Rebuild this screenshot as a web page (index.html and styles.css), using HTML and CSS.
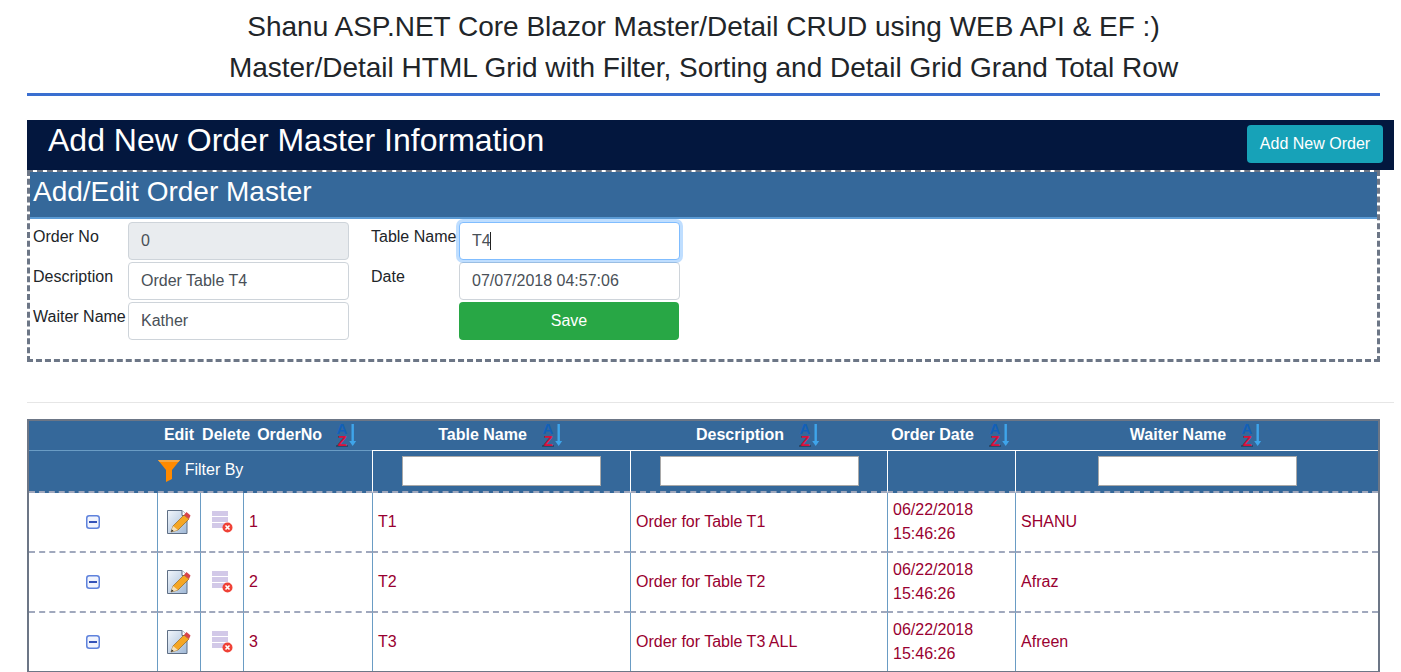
FILE: index.html
```html
<!doctype html>
<html lang="en-us">
	<head>
		<meta charset="utf-8">
		<title>Shanu ASP.NET Core Blazor Master/Detail CRUD</title>
		<link rel="stylesheet" href="styles.css">
	</head>
	<body>
		<svg class="sprite" width="0" height="0">
			<defs>
				<linearGradient id="page-fill" x1="0" y1="0" x2="1" y2="1">
					<stop offset="0" stop-color="#f2f6fb"/>
					<stop offset="1" stop-color="#9fb8d6"/>
				</linearGradient>
				<symbol id="icon-sort" viewBox="0 0 22 26">
					<rect x="1" y="23" width="12" height="2" fill="#2b4a6b"/>
					<text class="sort-a" x="7" y="12" text-anchor="middle">A</text>
					<text class="sort-z" x="7" y="24" text-anchor="middle">Z</text>
					<path d="M16.5 2h2.4v17h2.3l-3.5 5-3.500-5h2.300z" fill="#3fa5ea"/>
				</symbol>
				<symbol id="icon-minus" viewBox="0 0 14 14">
					<rect x=".75" y=".75" width="12.5" height="12.500" rx="2.500" fill="#f1f4fd" stroke="#5f82dc" stroke-width="1.500"/>
					<rect x="3" y="6" width="8" height="2" fill="#3453b8"/>
				</symbol>
				<symbol id="icon-edit" viewBox="0 0 24 24">
					<path d="M.5.500h14.500l5 5v18h-19.500z" fill="url(#page-fill)" stroke="#5f6f85"/>
					<path d="M15 .5v5h5" fill="#fff" stroke="#5f6f85"/>
					<path d="M4 22l2-6 11-11 5 4-11 11z" fill="#f5a623" stroke="#8a5a10" stroke-width=".6"/>
					<path d="M4 22l2-6 5 4z" fill="#f6dfb5"/>
					<path d="M4 22l.8-2.500 1.800 1.400z" fill="#222"/>
					<path d="M17 5l2.500-3 4 3.500-1.500 3.500z" fill="#d8434a"/>
				</symbol>
				<symbol id="icon-delete" viewBox="0 0 21 23">
					<rect x="0" y="0" width="16" height="5" fill="#d2c9e8"/>
					<rect x="0" y="6" width="16" height="5" fill="#d2c9e8"/>
					<rect x="0" y="12" width="16" height="5" fill="#d2c9e8"/>
					<circle cx="15.500" cy="16.500" r="5" fill="#ef4136"/>
					<path d="M13.500 14.500l4 4m0-4l-4 4" stroke="#fff" stroke-width="1.600" fill="none"/>
				</symbol>
				<symbol id="icon-filter" viewBox="0 0 22 22">
					<path d="M0 0h22l-8 10v9l-6 3v-12z" fill="#ff8a00"/>
					<path d="M0 0h22l-1.500 2h-19z" fill="#f5a742"/>
				</symbol>
			</defs>
		</svg>

		<div id="page">
			<div class="title">
				<div>Shanu ASP.NET Core Blazor Master/Detail CRUD using WEB API &amp; EF :)</div>
				<div>Master/Detail HTML Grid with Filter, Sorting and Detail Grid Grand Total Row</div>
			</div>
			<div class="rule-blue"></div>

			<div class="bar">
				<h1>Add New Order Master Information</h1>
				<button class="btn btn-add">Add New Order</button>
			</div>

			<div class="form-box">
				<h2>Add/Edit Order Master</h2>
				<div class="form-grid">
					<label>Order No</label>
					<input class="field field-off" value="0" readonly>
					<label class="second">Table Name</label>
					<div class="caret-wrap">
						<input class="field field-focus" value="T4">
						<span class="caret"></span>
					</div>

					<label>Description</label>
					<input class="field" value="Order Table T4">
					<label class="second">Date</label>
					<input class="field" value="07/07/2018 04:57:06">

					<label>Waiter Name</label>
					<input class="field" value="Kather">
					<span></span>
					<button class="btn btn-save">Save</button>
				</div>
			</div>

			<div class="rule-grey"></div>

			<table class="grid">
				<colgroup>
					<col class="c-toggle"><col class="c-icon"><col class="c-icon"><col class="c-no">
					<col class="c-table"><col class="c-desc"><col class="c-date"><col class="c-waiter">
				</colgroup>
				<thead>
					<tr class="head-row">
						<th colspan="4">
							<div class="head-first">
								<span class="head-edit">Edit</span><span>Delete</span><span>OrderNo</span>
								<svg class="sort"><use href="#icon-sort"/></svg>
							</div>
						</th>
						<th><div class="head-cell">Table Name <svg class="sort"><use href="#icon-sort"/></svg></div></th>
						<th><div class="head-cell">Description <svg class="sort"><use href="#icon-sort"/></svg></div></th>
						<th><div class="head-cell">Order Date <svg class="sort"><use href="#icon-sort"/></svg></div></th>
						<th><div class="head-cell">Waiter Name <svg class="sort"><use href="#icon-sort"/></svg></div></th>
					</tr>
					<tr class="filter-row">
						<th colspan="4">
							<div class="filter-by"><svg class="funnel"><use href="#icon-filter"/></svg><span class="filter-text">Filter By</span></div>
						</th>
						<th><input class="filter-input"></th>
						<th><input class="filter-input"></th>
						<th></th>
						<th><input class="filter-input"></th>
					</tr>
				</thead>
				<tbody>
					<tr>
						<td class="ic"><svg class="i-minus"><use href="#icon-minus"/></svg></td>
						<td class="ic"><svg class="i-edit"><use href="#icon-edit"/></svg></td>
						<td class="ic"><svg class="i-delete"><use href="#icon-delete"/></svg></td>
						<td>1</td>
						<td>T1</td>
						<td>Order for Table T1</td>
						<td>06/22/2018<br>15:46:26</td>
						<td>SHANU</td>
					</tr>
					<tr>
						<td class="ic"><svg class="i-minus"><use href="#icon-minus"/></svg></td>
						<td class="ic"><svg class="i-edit"><use href="#icon-edit"/></svg></td>
						<td class="ic"><svg class="i-delete"><use href="#icon-delete"/></svg></td>
						<td>2</td>
						<td>T2</td>
						<td>Order for Table T2</td>
						<td>06/22/2018<br>15:46:26</td>
						<td>Afraz</td>
					</tr>
					<tr>
						<td class="ic"><svg class="i-minus"><use href="#icon-minus"/></svg></td>
						<td class="ic"><svg class="i-edit"><use href="#icon-edit"/></svg></td>
						<td class="ic"><svg class="i-delete"><use href="#icon-delete"/></svg></td>
						<td>3</td>
						<td>T3</td>
						<td>Order for Table T3 ALL</td>
						<td>06/22/2018<br>15:46:26</td>
						<td>Afreen</td>
					</tr>
				</tbody>
			</table>
		</div>
	</body>
</html>
```

FILE: styles.css
```css
html, body {
	margin: 0;
	background-color: #fff;
	color: #212529;
	font-family: "Liberation Sans", Arial, sans-serif;
	font-size: 16px;
	line-height: 24px;
}
.sprite {
	position: absolute;
}
#page {
	padding: 6px 7px 0 27px;
}

.title {
	width: 1353px;
	text-align: center;
	font-size: 28px;
	line-height: 41px;
}
.rule-blue {
	width: 1353px;
	height: 3px;
	margin: 5px 0 24px 0;
	background-color: #3a6fd0;
}
.rule-grey {
	height: 1px;
	margin: 40px 0 16px 0;
	background-color: #e6e6e6;
}

.bar {
	display: flex;
	justify-content: space-between;
	height: 50px;
	padding: 0 11px 0 21px;
	background-color: #03173e;
}
h1 {
	margin: 0;
	color: #fff;
	font-size: 32px;
	font-weight: 400;
	line-height: 40px;
}
.btn {
	height: 38px;
	border: 0;
	border-radius: 4px;
	color: #fff;
	font-family: inherit;
	font-size: 16px;
}
.btn-add {
	width: 136px;
	margin-top: 5px;
	background-color: #17a2b8;
}
.btn-save {
	width: 220px;
	background-color: #28a745;
}

.form-box {
	width: 1347px;
	height: 187px;
	border: 3px dashed #6c7686;
	border-top-width: 2px;
}
h2 {
	margin: 0;
	height: 45px;
	padding-left: 3px;
	border-bottom: 2px solid #5b9bd5;
	background-color: #35689a;
	color: #fff;
	font-size: 28px;
	font-weight: 400;
	line-height: 40px;
}
.form-grid {
	display: grid;
	grid-template-columns: 95px 221px 110px 221px;
	grid-auto-rows: 38px;
	row-gap: 2px;
	padding: 3px 0 0 3px;
}
.form-grid label {
	line-height: 30px;
}
.form-grid .second {
	padding-left: 22px;
	white-space: nowrap;
}
.field {
	box-sizing: border-box;
	width: 221px;
	height: 38px;
	padding: 0 12px;
	border: 1px solid #ced4da;
	border-radius: 4px;
	color: #495057;
	font-family: inherit;
	font-size: 16px;
}
.field-off {
	background-color: #e9ecef;
}
.field-focus {
	border-color: #80bdff;
	box-shadow: 0 0 0 3px rgba(0, 123, 255, 0.25);
	outline: none;
}
.caret-wrap {
	position: relative;
}
.caret {
	position: absolute;
	left: 31px;
	top: 10px;
	width: 1px;
	height: 18px;
	background-color: #222;
}

.grid {
	box-sizing: border-box;
	width: 1353px;
	table-layout: fixed;
	border: 2px solid #6c7686;
	border-spacing: 0;
}
.c-toggle { width: 128px; }
.c-icon { width: 43px; }
.c-no { width: 129px; }
.c-table { width: 258px; }
.c-desc { width: 257px; }
.c-date { width: 128px; }
.c-waiter { width: 363px; }

th {
	padding: 0;
	background-color: #35689a;
	color: #fff;
	vertical-align: middle;
}
.head-row th {
	height: 27px;
	padding-bottom: 2px;
	border-bottom: 1px solid #fff;
}
.head-row th:first-child {
	border-bottom-color: #6a9cc4;
}
.head-first {
	display: flex;
	justify-content: flex-end;
	align-items: center;
	gap: 7px;
	padding-right: 15px;
}
.head-edit {
	margin-right: 1px;
}
.head-first .sort {
	margin-left: 6px;
}
.head-cell {
	display: flex;
	justify-content: center;
	align-items: center;
	gap: 14px;
	padding-right: 1px;
}
.sort {
	width: 22px;
	height: 26px;
}
.sort-a, .sort-z {
	font-family: "Liberation Sans", Arial, sans-serif;
	font-size: 15px;
	font-weight: 700;
}
.sort-a {
	fill: #1260b8;
}
.sort-z {
	fill: #d8103a;
}

.filter-row th {
	height: 40px;
	border-bottom: 2px dashed #a0a8bd;
}
.filter-row th + th {
	border-left: 1px solid #fff;
}
.filter-by {
	display: flex;
	justify-content: center;
	align-items: center;
	gap: 5px;
	font-weight: 400;
}
.filter-text {
	margin-bottom: 2px;
}
.funnel {
	width: 22px;
	height: 22px;
}
.filter-input {
	box-sizing: border-box;
	display: block;
	width: 199px;
	height: 30px;
	margin: 0 auto;
	border: 1px solid #a9a9a9;
	background-color: #fff;
}

td {
	padding: 5px;
	border-bottom: 2px dashed #a0a8bd;
	color: #990030;
	vertical-align: middle;
}
td + td {
	border-left: 1px solid #6a9cc4;
}
tbody tr:last-child td {
	border-bottom: 0;
}
.ic {
	padding: 5px 0;
	text-align: center;
}
.ic svg {
	display: block;
	margin: 0 auto;
}
.i-minus {
	width: 14px;
	height: 14px;
}
.i-edit {
	width: 24px;
	height: 24px;
}
.i-delete {
	width: 21px;
	height: 23px;
}
```
